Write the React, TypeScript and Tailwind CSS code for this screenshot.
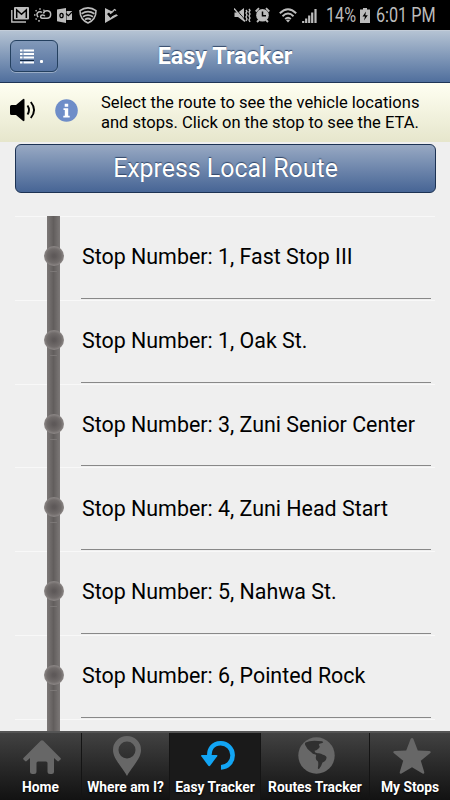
import React from 'react';

const stops = [
  { id: 1, number: 1, name: 'Fast Stop III' },
  { id: 2, number: 1, name: 'Oak St.' },
  { id: 3, number: 3, name: 'Zuni Senior Center' },
  { id: 4, number: 4, name: 'Zuni Head Start' },
  { id: 5, number: 5, name: 'Nahwa St.' },
  { id: 6, number: 6, name: 'Pointed Rock' },
];

function StatusBar() {
  return (
    <div className="h-[30px] shrink-0 bg-black text-[#bcbcbc] flex items-center pl-[11px] pr-[14px]">
      <div className="flex items-center">
        {/* mail */}
        <svg className="w-[18px] h-4" viewBox="0 0 18 16" fill="none" stroke="currentColor">
          <path d="M.8 3v12H15" strokeWidth="1.4" />
          <rect x="3" y="0" width="15" height="12.6" rx="1" fill="currentColor" stroke="none" />
          <path d="M5.7 11V3l4.8 4.2L15.3 3v8" stroke="#000" strokeWidth="1.5" />
        </svg>
        {/* weather */}
        <svg className="w-[18px] h-[15px] ml-[5px]" viewBox="0 0 18 15" fill="none" stroke="currentColor" strokeWidth="1.5">
          <path d="M8 4.6a2.900 2.900 0 1 0-3.700 4.400" />
          <path d="M6 .3v1.500M1.600 2.200l1 1M0 7h1.500M1.600 11.500l1-1M5 12v1.800M10.400 1.700l-.9 1" />
          <path d="M8 10.200H13a3.700 3.700 0 1 0-3.600-4.700M8.200 10.200c-2.400-.4-2-3.500.6-3.300 1 0 1.700.6 2 1.300" />
        </svg>
        {/* outlook */}
        <svg className="w-4 h-[15px] ml-[5px]" viewBox="0 0 16 15">
          <path d="M0 1.500 9 0v15L0 13.200z" fill="currentColor" />
          <path d="M9.500 3H15v9H9.500z" fill="currentColor" />
          <path d="m9 5.500 2.400 2.200L15 4" fill="none" stroke="#000" strokeWidth="1.200" />
          <ellipse cx="4.500" cy="7.500" rx="1.600" ry="2.200" fill="none" stroke="#000" strokeWidth="1.300" />
        </svg>
        {/* wifi shield */}
        <svg className="w-[18px] h-[17px] ml-[6px]" viewBox="0 0 18 17" fill="none" stroke="currentColor" strokeWidth="1.600">
          <path d="M9 .9C6.500.9 3.200 2 1 3.700 1 9.500 4 13.800 9 16c5-2.200 8-6.500 8-12.300C14.800 2 11.500.9 9 .9z" />
          <path d="M2.600 6.800Q9 2.500 15.400 6.800M4 9.800Q9 6.500 14 9.800M6 12.500Q9 10.500 12 12.500" strokeWidth="1.800" />
        </svg>
        {/* play */}
        <svg className="w-[13px] h-[15px] ml-[8px]" viewBox="0 0 13 15">
          <path d="M0 0v15L13 7.500 11.300 6.200 5.200 9 2.300 5.800 4 4.500 5.500 6.200 9 3.500 5.500 2.800z" fill="currentColor" />
          <path d="m2.800 5.800 2.700 3L11 3" fill="none" stroke="#000" strokeWidth="1.500" />
          <path d="m7.500 3.500 2-2 1.500 1" fill="none" stroke="currentColor" strokeWidth="1.200" />
        </svg>
      </div>

      <div className="flex items-center ml-auto">
        {/* vibrate / muted */}
        <svg className="w-[17px] h-[16px]" viewBox="0 0 17 16" fill="none" stroke="currentColor">
          <path d="M.5 5.500h3.500L10 1v13.500l-6-4.500H.5z" fill="currentColor" stroke="none" />
          <path d="m1.500 1.500 10 12" stroke="#000" strokeWidth="1" />
          <path d="m0 1.500 11 13" strokeWidth="1.400" />
          <path d="m12 3 1 1.500-1 1.500 1 2-1 2 1 2-1 2M15 2l1 1.500-1 1.500 1 2-1 2 1 2-1 2 1 2" strokeWidth="1.400" />
        </svg>
        {/* alarm */}
        <svg className="w-[15px] h-[16px] ml-[4px]" viewBox="0 0 15 16">
          <path d="M.7 4.500 4 1.200M14.300 4.500 11 1.200M2 15l2-2M13 15l-2-2" stroke="currentColor" strokeWidth="1.800" />
          <circle cx="7.500" cy="8.300" r="6.300" fill="currentColor" />
          <path d="M7.500 4.500v4.300H11" stroke="#000" strokeWidth="1.500" fill="none" />
        </svg>
        {/* wifi */}
        <svg className="w-[18px] h-[15px] ml-[9px]" viewBox="0 0 18 15" fill="none" stroke="currentColor" strokeWidth="1.900">
          <path d="M.8 5.300Q9-2.800 17.200 5.300M3.500 8.200Q9 2.800 14.500 8.200M6.200 11Q9 8.300 11.800 11" />
          <path d="m9 14.500-2-2.300Q9 10.800 11 12.200z" fill="currentColor" stroke="none" />
        </svg>
        {/* signal */}
        <svg className="w-[15px] h-[15px] ml-[5px]" viewBox="0 0 15 15" stroke="currentColor">
          <path d="M1.200 15v-2M4.200 15v-4.500M7.200 15V7.500M10.200 15V4.500M13.500 15V1" strokeWidth="2.200" />
        </svg>
        <div className="w-[30px] ml-[9px] pt-[2px]">
          <span className="block w-max origin-left scale-x-[0.83] text-[19.5px] leading-[30px]">14%</span>
        </div>
        {/* battery */}
        <svg className="w-[10px] h-[15px] ml-[4px]" viewBox="0 0 10 15">
          <path d="M3 0h4v1.500h3V15H0V1.500h3z" fill="currentColor" />
          <path d="M6 3.500 2.500 8.500H5L4 12.500 7.800 7.300H5.300z" fill="#000" />
        </svg>
        <div className="w-[60px] ml-[6px] pt-[2px]">
          <span className="block w-max origin-left scale-x-[0.83] text-[19.5px] leading-[30px]">6:01 PM</span>
        </div>
      </div>
    </div>
  );
}

function Header() {
  return (
    <div className="h-[53px] shrink-0 grid grid-cols-[1fr_auto_1fr] items-center px-[10px] border-t border-b border-t-[#c3cdd9] border-b-[#1f3556] bg-linear-to-b from-[#b5c3d3] to-[#506f9d]">
      <button className="w-[48px] h-[32px] -mt-[1px] flex items-center pl-[9px] rounded-[6px] border border-[#24405f] bg-linear-to-b from-[#8299b9] to-[#5673a0] shadow-[0_1px_0_rgba(255,255,255,0.35)]">
        <svg className="w-[14px] h-[15px]" viewBox="0 0 14 15">
          <path d="M0 1.500h2.500M3.500 1.500H14M0 5h2.500M3.500 5H14M0 8.500h2.500M3.500 8.500H14M0 13.500h2.500M3.500 13.500H14" stroke="#fff" strokeWidth="2" />
          <path d="M0 11.500h14" stroke="#10253f" strokeWidth="1" />
        </svg>
        <span className="w-[3px] h-[3px] ml-[6px] mt-[10px] bg-white rounded-[1px]" />
      </button>
      <h1 className="-mt-[2px] text-[23.4px] leading-[28px] font-bold text-white [text-shadow:0_-1px_1px_#33496b]">Easy Tracker</h1>
      <span />
    </div>
  );
}

function InfoBanner() {
  return (
    <div className="h-[59px] shrink-0 flex pl-[10px] bg-linear-to-b from-[#fffff2] to-[#e6e6cc]">
      <svg className="w-[26px] h-[24px] mt-[15px]" viewBox="0 0 26 24">
        <path d="M1.500 7H6l6.500-5.500Q14.500 0 14.500 2v20q0 2-2 .5L6 17H1.500Q0 17 0 15.500v-7Q0 7 1.500 7z" fill="#000" />
        <path d="M17.500 7.500q3 4.500 0 9M20.800 4q6.500 8 0 16" fill="none" stroke="#000" strokeWidth="1.900" />
      </svg>
      <svg className="w-[23px] h-[23px] ml-[19px] mt-[16px]" viewBox="0 0 23 23">
        <circle cx="11.500" cy="11.500" r="11.300" fill="#6e8dc8" />
        <path d="M9.700 4.700h3.500v3H9.700zM8.500 9.300h4.700v7.500h1.500v1.700H8.300v-1.700h1.500v-5.800H8.500z" fill="#fff" />
      </svg>
      <p className="ml-[23px] mt-[10px] text-[16.55px] leading-[20px] text-black whitespace-nowrap">
        Select the route to see the vehicle locations<br />
        and stops. Click on the stop to see the ETA.
      </p>
    </div>
  );
}

function StopRow({ label }: { label: string }) {
  return (
    <li className="h-[83.750px] flex border-t border-[#f8f8f8]">
      <div className="relative w-[13px] ml-[32px] -mt-px bg-linear-to-r from-[#7c7877] via-[#625e5d] to-[#7c7877]">
        <span className="absolute -left-[3.5px] top-[30px] w-[20px] h-[20px] rounded-full bg-[radial-gradient(circle_at_50%_50%,#5e5959_10%,#716c6b_50%,#938e8d_75%)]" />
        <span className="absolute left-[3px] top-[55px] w-[7px] h-px bg-[#7b7776]" />
      </div>
      <div className="ml-[21px] mb-[1px] flex-1 mr-[4px] border-b border-[#888] pl-[1px] flex items-center">
        <span className="text-[21.42px] leading-[26px] text-black whitespace-nowrap">{label}</span>
      </div>
    </li>
  );
}

function TabBar() {
  const tab = 'flex flex-col items-center justify-end border-r border-[#141414] pb-[4px]';
  const text = 'text-[13.8px] leading-[18px] font-bold text-white whitespace-nowrap [text-shadow:0_1px_2px_#000]';

  return (
    <nav className="h-[69px] shrink-0 grid grid-cols-[82px_88px_91px_109px_80px] border-t-[2px] border-[#555] bg-linear-to-b from-[#424242] to-[#121212]">
      <div className={tab}>
        <svg className="w-[38px] h-[34px] mb-[4px] ml-[3px]" viewBox="0 0 38 34" fill="#676767">
          <path d="M17.700.8q1.300-1.300 2.600 0L37.500 18q.8.800 0 1.600l-1.600 1.500q-.8.700-1.600 0L31 18v13.500q0 2.500-2.500 2.500H27q-2.500 0-2.500-2.500V23q0-1.500-1.500-1.500h-8q-1.500 0-1.500 1.500v8.500q0 2.500-2.500 2.500H9.500Q7 34 7 31.500V18l-3.300 3.100q-.8.700-1.600 0L.5 19.600q-.8-.8 0-1.600z" />
        </svg>
        <span className={text}>Home</span>
      </div>
      <div className={tab}>
        <svg className="w-[28px] h-[40px] mb-[2px] ml-[2px]" viewBox="0 0 28 40" fill="#676767">
          <path fillRule="evenodd" d="M14 0a14 14 0 0 1 14 14c0 6-4 11-7 15.500C17.500 34.500 15.500 37 14 40c-1.500-3-3.500-5.500-7-10.500C4 25 0 20 0 14A14 14 0 0 1 14 0zm0 5.500a8.500 8.500 0 1 0 0 17 8.500 8.500 0 0 0 0-17z" />
        </svg>
        <span className={text}>Where am I?</span>
      </div>
      <div className="flex flex-col items-center justify-end border-r border-[#141414] pb-[4px] bg-[#1a1a1a]">
        <svg className="w-[34px] h-[30px] mb-[7px] ml-[5px]" viewBox="0 0 34 30">
          <path d="M8.500 16C7.500 8 12 2.300 19.500 2.300A11.800 12 0 0 1 20 26.400" fill="none" stroke="#12a5f4" strokeWidth="4.600" />
          <path d="M1 14h14.500q1.500 0 .7 1.300L9.300 24.500q-1.100 1.400-2.200 0L.3 15.300Q-.5 14 1 14z" fill="#12a5f4" />
        </svg>
        <span className={text}>Easy Tracker</span>
      </div>
      <div className={tab}>
        <svg className="w-[37px] h-[37px] mb-[4px] ml-[2px]" viewBox="0 0 37 37">
          <circle cx="18.500" cy="18.500" r="18.200" fill="#676767" />
          <path d="M7.500 5.500Q13 2.500 24 4.300q2.500 1-.5 2-4 .5-2 2.700.8 1.500-1.500 3-1.500 1.500-3.500 1.700 0 2 3 2.600 3-.6 5.500 1.500 4 1.200 3.500 3.200-.5 3-4 4.500-1 3.500-3.500 6.500-1.500.5-1-2 .5-3.500 0-5.500-3-2-2-5 .5-1.500-.5-2-3-.5-4.500-2.500Q9 12.500 7.800 9q-1.500-2-.3-3.500z" fill="#303030" />
        </svg>
        <span className={text}>Routes Tracker</span>
      </div>
      <div className="flex flex-col items-center justify-end pb-[4px]">
        <svg className="w-[38px] h-[36px] mb-[4px] ml-[3px]" viewBox="0 0 38 36" fill="#676767">
          <path d="M17.700.8q1.300-1.600 2.600 0l4.500 11.700 11.700.4q2 .5.800 2.200l-9.500 7.600 3.500 11.500q.2 2-1.800 1.400L19 29.200 8.500 35.600q-2 .6-1.800-1.400l3.500-11.500-9.500-7.600q-1.200-1.700.8-2.200l11.700-.4z" />
        </svg>
        <span className={text}>My Stops</span>
      </div>
    </nav>
  );
}

export default function App() {
  return (
    <div className="w-[450px] h-[800px] flex flex-col overflow-hidden bg-[#efefef] font-['Roboto',sans-serif]">
      <StatusBar />
      <Header />
      <InfoBanner />
      <main className="flex-1 min-h-0 overflow-hidden px-[15px] pt-[2px]">
        <button className="block w-[421px] h-[49px] rounded-[6px] border border-[#1c3253] bg-linear-to-b from-[#98a9c3] to-[#476595] text-white text-[24.9px] leading-[46px] [text-shadow:0_-1px_1px_#33496b]">
          Express Local Route
        </button>
        <ul className="mt-[23px]">
          {stops.map(stop => (
            <StopRow key={stop.id} label={`Stop Number: ${stop.number}, ${stop.name}`} />
          ))}
          <li className="flex border-t border-[#f8f8f8]">
            <div className="w-[13px] h-[20px] ml-[32px] -mt-px bg-linear-to-r from-[#7c7877] via-[#625e5d] to-[#7c7877]" />
          </li>
        </ul>
      </main>
      <TabBar />
    </div>
  );
}
